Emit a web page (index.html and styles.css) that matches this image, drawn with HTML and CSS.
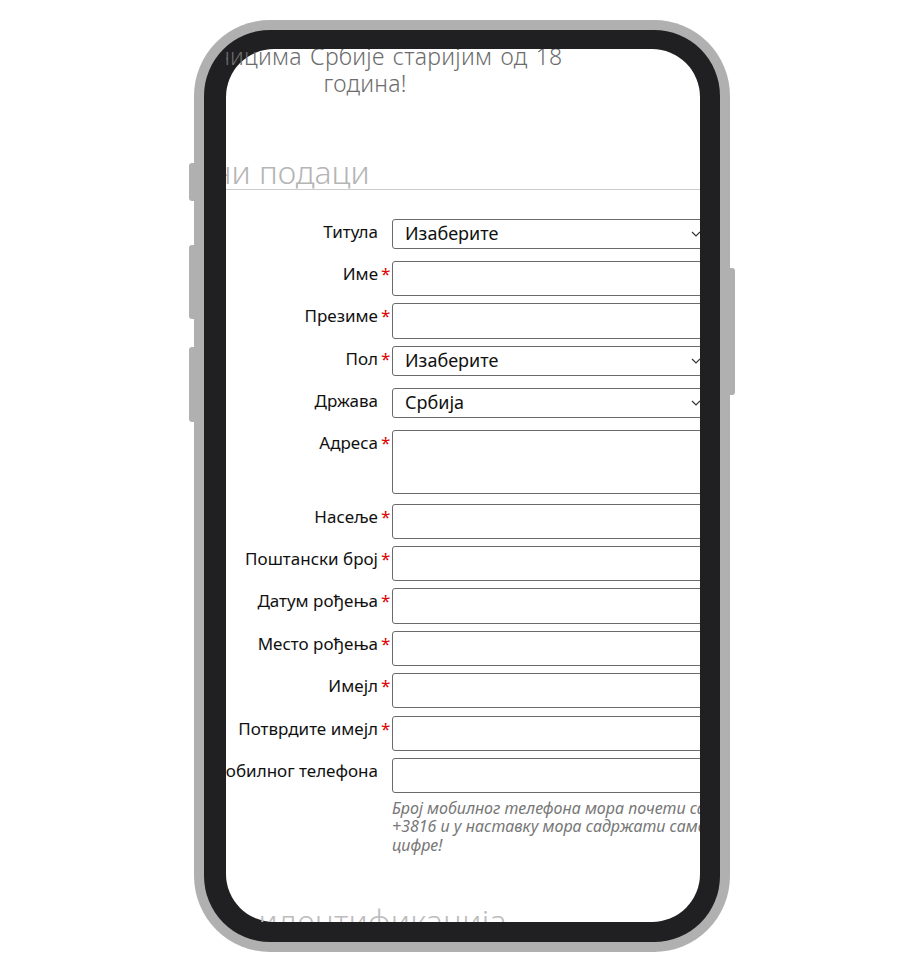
FILE: index.html
```html
<!DOCTYPE html>
<html lang="sr">
<head>
<meta charset="utf-8">
<title>Лични подаци</title>
<link rel="stylesheet" href="styles.css">
</head>
<body>
<div class="phone">
  <span class="side-btn left b1"></span>
  <span class="side-btn left b2"></span>
  <span class="side-btn left b3"></span>
  <span class="side-btn right b4"></span>
  <div class="bezel">
    <div class="viewport">
      <div class="page">
        <p class="notice">учесницима Србије старијим од 18<br>година!</p>

        <h2 class="section-title">Лични подаци</h2>

        <form class="form">
          <div class="row">
            <label class="label">Титула<span class="req"></span></label>
            <div class="control select"><span>Изаберите</span><svg class="chev" width="10" height="6" viewBox="0 0 10 6"><path d="M1 1 L5 5 L9 1" fill="none" stroke="#333" stroke-width="1.2"/></svg></div>
          </div>
          <div class="row">
            <label class="label">Име<span class="req">*</span></label>
            <div class="control input"></div>
          </div>
          <div class="row">
            <label class="label">Презиме<span class="req">*</span></label>
            <div class="control input"></div>
          </div>
          <div class="row">
            <label class="label">Пол<span class="req">*</span></label>
            <div class="control select"><span>Изаберите</span><svg class="chev" width="10" height="6" viewBox="0 0 10 6"><path d="M1 1 L5 5 L9 1" fill="none" stroke="#333" stroke-width="1.2"/></svg></div>
          </div>
          <div class="row">
            <label class="label">Држава<span class="req"></span></label>
            <div class="control select"><span>Србија</span><svg class="chev" width="10" height="6" viewBox="0 0 10 6"><path d="M1 1 L5 5 L9 1" fill="none" stroke="#333" stroke-width="1.2"/></svg></div>
          </div>
          <div class="row row-area">
            <label class="label">Адреса<span class="req">*</span></label>
            <div class="control textarea"></div>
          </div>
          <div class="row">
            <label class="label">Насеље<span class="req">*</span></label>
            <div class="control input"></div>
          </div>
          <div class="row">
            <label class="label">Поштански број<span class="req">*</span></label>
            <div class="control input"></div>
          </div>
          <div class="row">
            <label class="label">Датум рођења<span class="req">*</span></label>
            <div class="control input"></div>
          </div>
          <div class="row">
            <label class="label">Место рођења<span class="req">*</span></label>
            <div class="control input"></div>
          </div>
          <div class="row">
            <label class="label">Имејл<span class="req">*</span></label>
            <div class="control input"></div>
          </div>
          <div class="row">
            <label class="label">Потврдите имејл<span class="req">*</span></label>
            <div class="control input"></div>
          </div>
          <div class="row row-phone">
            <label class="label">Број мобилног телефона<span class="req"></span></label>
            <div class="control input"></div>
          </div>
          <p class="hint">Број мобилног телефона мора почети са<br>+3816 и у наставку мора садржати само<br>цифре!</p>
        </form>

        <h2 class="section-title next">Лична идентификација</h2>
      </div>
    </div>
  </div>
</div>
</body>
</html>
```

FILE: styles.css
```css
* {
  box-sizing: border-box;
}

html,
body {
  margin: 0;
  height: 100%;
}

body {
  background: #ffffff;
  display: flex;
  align-items: center;
  justify-content: center;
  font-family: "Noto Sans", "DejaVu Sans", sans-serif;
  font-feature-settings: "locl" 0;
}

.phone {
  position: relative;
  width: 536px;
  height: 932px;
  padding: 10px;
  background: #b0b0b0;
  border-radius: 76px;
}

.side-btn {
  position: absolute;
  width: 7px;
  background: #b0b0b0;
}

.side-btn.left {
  left: -5px;
  border-radius: 3px 0 0 3px;
}

.side-btn.right {
  right: -5px;
  border-radius: 0 3px 3px 0;
}

.b1 { top: 143px; height: 38px; }
.b2 { top: 225px; height: 74px; }
.b3 { top: 327px; height: 75px; }
.b4 { top: 248px; height: 127px; }

.bezel {
  height: 100%;
  background: #202022;
  border-radius: 66px;
  padding: 19px 20px 20px 22px;
}

.viewport {
  position: relative;
  height: 100%;
  overflow: hidden;
}

.viewport::before {
  content: "";
  position: absolute;
  inset: 0;
  background: #ffffff;
  border-radius: 48px;
}

.page {
  position: relative;
  margin-top: -6px;
  margin-left: -61px;
  width: 680px;
}

.notice {
  margin: 0;
  width: 400px;
  text-align: center;
  white-space: nowrap;
  font-size: 23px;
  letter-spacing: 0.25px;
  word-spacing: 2px;
  line-height: 27px;
  font-weight: 300;
  color: #6c6c6c;
}

.section-title {
  margin: 58px 0 29px -12px;
  font-size: 32px;
  line-height: 34px;
  font-weight: 300;
  color: #b5b5b5;
  border-bottom: 1px solid #cccccc;
  white-space: nowrap;
}

.section-title.next {
  margin-top: 50px;
  margin-left: -34px;
  word-spacing: 22px;
  letter-spacing: 0.3px;
  color: #bdbdbd;
}

.form {
  margin: 0;
}

.row {
  display: flex;
  align-items: flex-start;
  min-height: 35px;
  margin-bottom: 7.1px;
}

.row-area {
  margin-bottom: 9.5px;
}

.label {
  flex: none;
  width: 225px;
  display: flex;
  justify-content: flex-end;
  padding-top: 3px;
  font-size: 17px;
  line-height: 20px;
  color: #111111;
  white-space: nowrap;
}

.req {
  flex: none;
  width: 12px;
  padding-left: 3px;
  color: #e00000;
}

.control {
  flex: none;
  margin-left: 2px;
  width: 320px;
  border: 1px solid #6a6a6a;
  border-radius: 3px;
  background: #ffffff;
}

.input {
  height: 35.3px;
}

.textarea {
  height: 64px;
}

.select {
  height: 30px;
  display: flex;
  align-items: center;
  justify-content: space-between;
  padding: 0 10px 0 12px;
  font-size: 18px;
  line-height: 22px;
  color: #111111;
}

.select span {
  margin-top: -2px;
}

.chev {
  display: block;
}

.hint {
  margin: -1.8px 0 0 227px;
  font-size: 16px;
  line-height: 18.5px;
  font-style: italic;
  color: #777777;
  white-space: nowrap;
}
```
